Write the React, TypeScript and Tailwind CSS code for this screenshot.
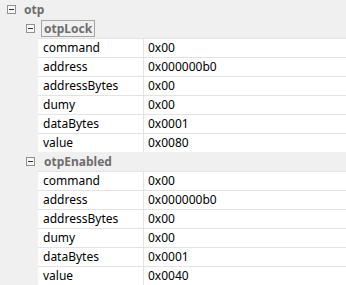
import React from 'react';

type Prop = { name: string; value: string };

const groups: { name: string; focused?: boolean; props: Prop[] }[] = [
  {
    name: 'otpLock',
    focused: true,
    props: [
      { name: 'command', value: '0x00' },
      { name: 'address', value: '0x000000b0' },
      { name: 'addressBytes', value: '0x00' },
      { name: 'dumy', value: '0x00' },
      { name: 'dataBytes', value: '0x0001' },
      { name: 'value', value: '0x0080' },
    ],
  },
  {
    name: 'otpEnabled',
    props: [
      { name: 'command', value: '0x00' },
      { name: 'address', value: '0x000000b0' },
      { name: 'addressBytes', value: '0x00' },
      { name: 'dumy', value: '0x00' },
      { name: 'dataBytes', value: '0x0001' },
      { name: 'value', value: '0x0040' },
    ],
  },
];

function Minus() {
  return (
    <span className="flex h-[9px] w-[9px] shrink-0 items-center justify-center border border-[#919191] bg-[#f7f7f7]">
      <span className="h-px w-[5px] bg-[#333]" />
    </span>
  );
}

export default function App() {
  return (
    <div
      className="h-[285px] w-[346px] overflow-hidden bg-[#f0f0f0] text-[12px] text-black"
      style={{ fontFamily: '"Noto Sans", "Open Sans", sans-serif' }}
    >
      {/* root category */}
      <div className="flex h-[19px] items-center pl-[7px]">
        <Minus />
        <span className="ml-[8px] font-bold text-[#6d6d6d]">otp</span>
      </div>

      {groups.map((g) => (
        <div key={g.name}>
          <div className="flex h-[19px] items-center pl-[26px]">
            <Minus />
            <span
              className={
                g.focused
                  ? 'ml-[6px] flex h-[17px] items-center border border-[#a5a5a5] px-[2px] font-bold text-[#6d6d6d]'
                  : 'ml-[9px] font-bold text-[#6d6d6d]'
              }
            >
              {g.name}
            </span>
          </div>
          {g.props.map((p) => (
            <div
              key={p.name}
              className="ml-[38px] grid h-[19px] grid-cols-[106px_1fr] border-t border-[#e3e3e3] bg-white"
            >
              <div className="flex items-center border-r border-[#e3e3e3] pl-[5px]">{p.name}</div>
              <div className="flex items-center pl-[4px]">{p.value}</div>
            </div>
          ))}
        </div>
      ))}
    </div>
  );
}
